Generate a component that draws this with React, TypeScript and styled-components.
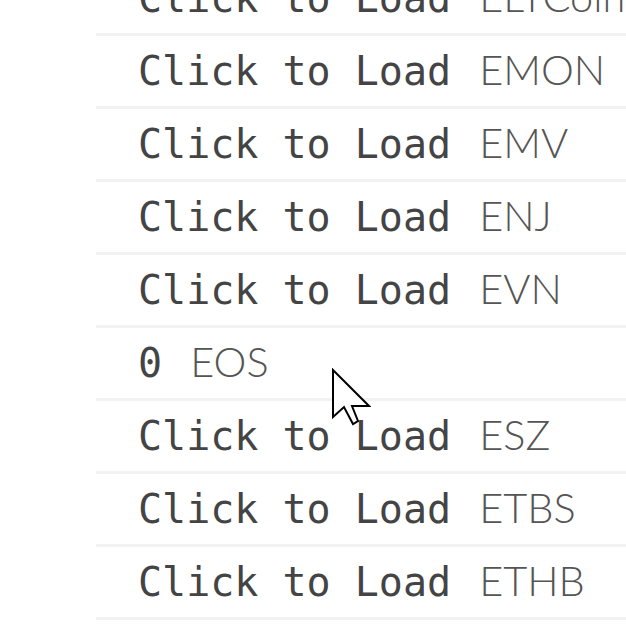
import React from 'react';
import styled, { createGlobalStyle } from 'styled-components';

const GlobalStyle = createGlobalStyle`
  html, body {
    margin: 0;
    padding: 0;
    background: #ffffff;
    overflow: hidden;
  }
`;

const coins = [
  { symbol: 'ELTCoin', value: null },
  { symbol: 'EMON', value: null },
  { symbol: 'EMV', value: null },
  { symbol: 'ENJ', value: null },
  { symbol: 'EVN', value: null },
  { symbol: 'EOS', value: '0' },
  { symbol: 'ESZ', value: null },
  { symbol: 'ETBS', value: null },
  { symbol: 'ETHB', value: null },
  { symbol: 'ETHD', value: null },
];

/**
 * Pointer cursor drawn over the list.
 */
const Pointer = () => (
  <PointerSvg width="40" height="58" viewBox="-2 -2 40 58">
    <polygon
      points="0,0 0,47 11,37 20,54 25,51 19,36 36,36"
      fill="#ffffff"
      stroke="#000000"
      strokeWidth="2"
      strokeLinejoin="miter"
    />
  </PointerSvg>
);

export default function App() {
  return (
    <Page>
      <GlobalStyle />
      <CoinList>
        {coins.map((coin) => (
          <CoinRow key={coin.symbol}>
            <Price>{coin.value ?? 'Click to Load'} </Price>
            <Symbol>{coin.symbol}</Symbol>
          </CoinRow>
        ))}
      </CoinList>
      <Pointer />
    </Page>
  );
}

const Page = styled.div`
  position: relative;
  width: 626px;
  height: 625px;
  overflow: hidden;
`;

const CoinList = styled.ul`
  list-style: none;
  margin: -37px 0 0 96px;
  padding: 0;
`;

const CoinRow = styled.li`
  height: 70px;
  line-height: 66px;
  padding-left: 42px;
  border-bottom: 3px solid #f2f2f2;
  white-space: nowrap;
`;

const Price = styled.span`
  font-family: 'DejaVu Sans Mono', monospace;
  font-size: 40px;
  color: #444444;
  white-space: pre;
`;

const Symbol = styled.span`
  font-family: Lato, sans-serif;
  font-weight: 300;
  font-size: 41.5px;
  margin-left: 4px;
  color: #555555;
`;

const PointerSvg = styled.svg`
  position: absolute;
  left: 331px;
  top: 368px;
`;
